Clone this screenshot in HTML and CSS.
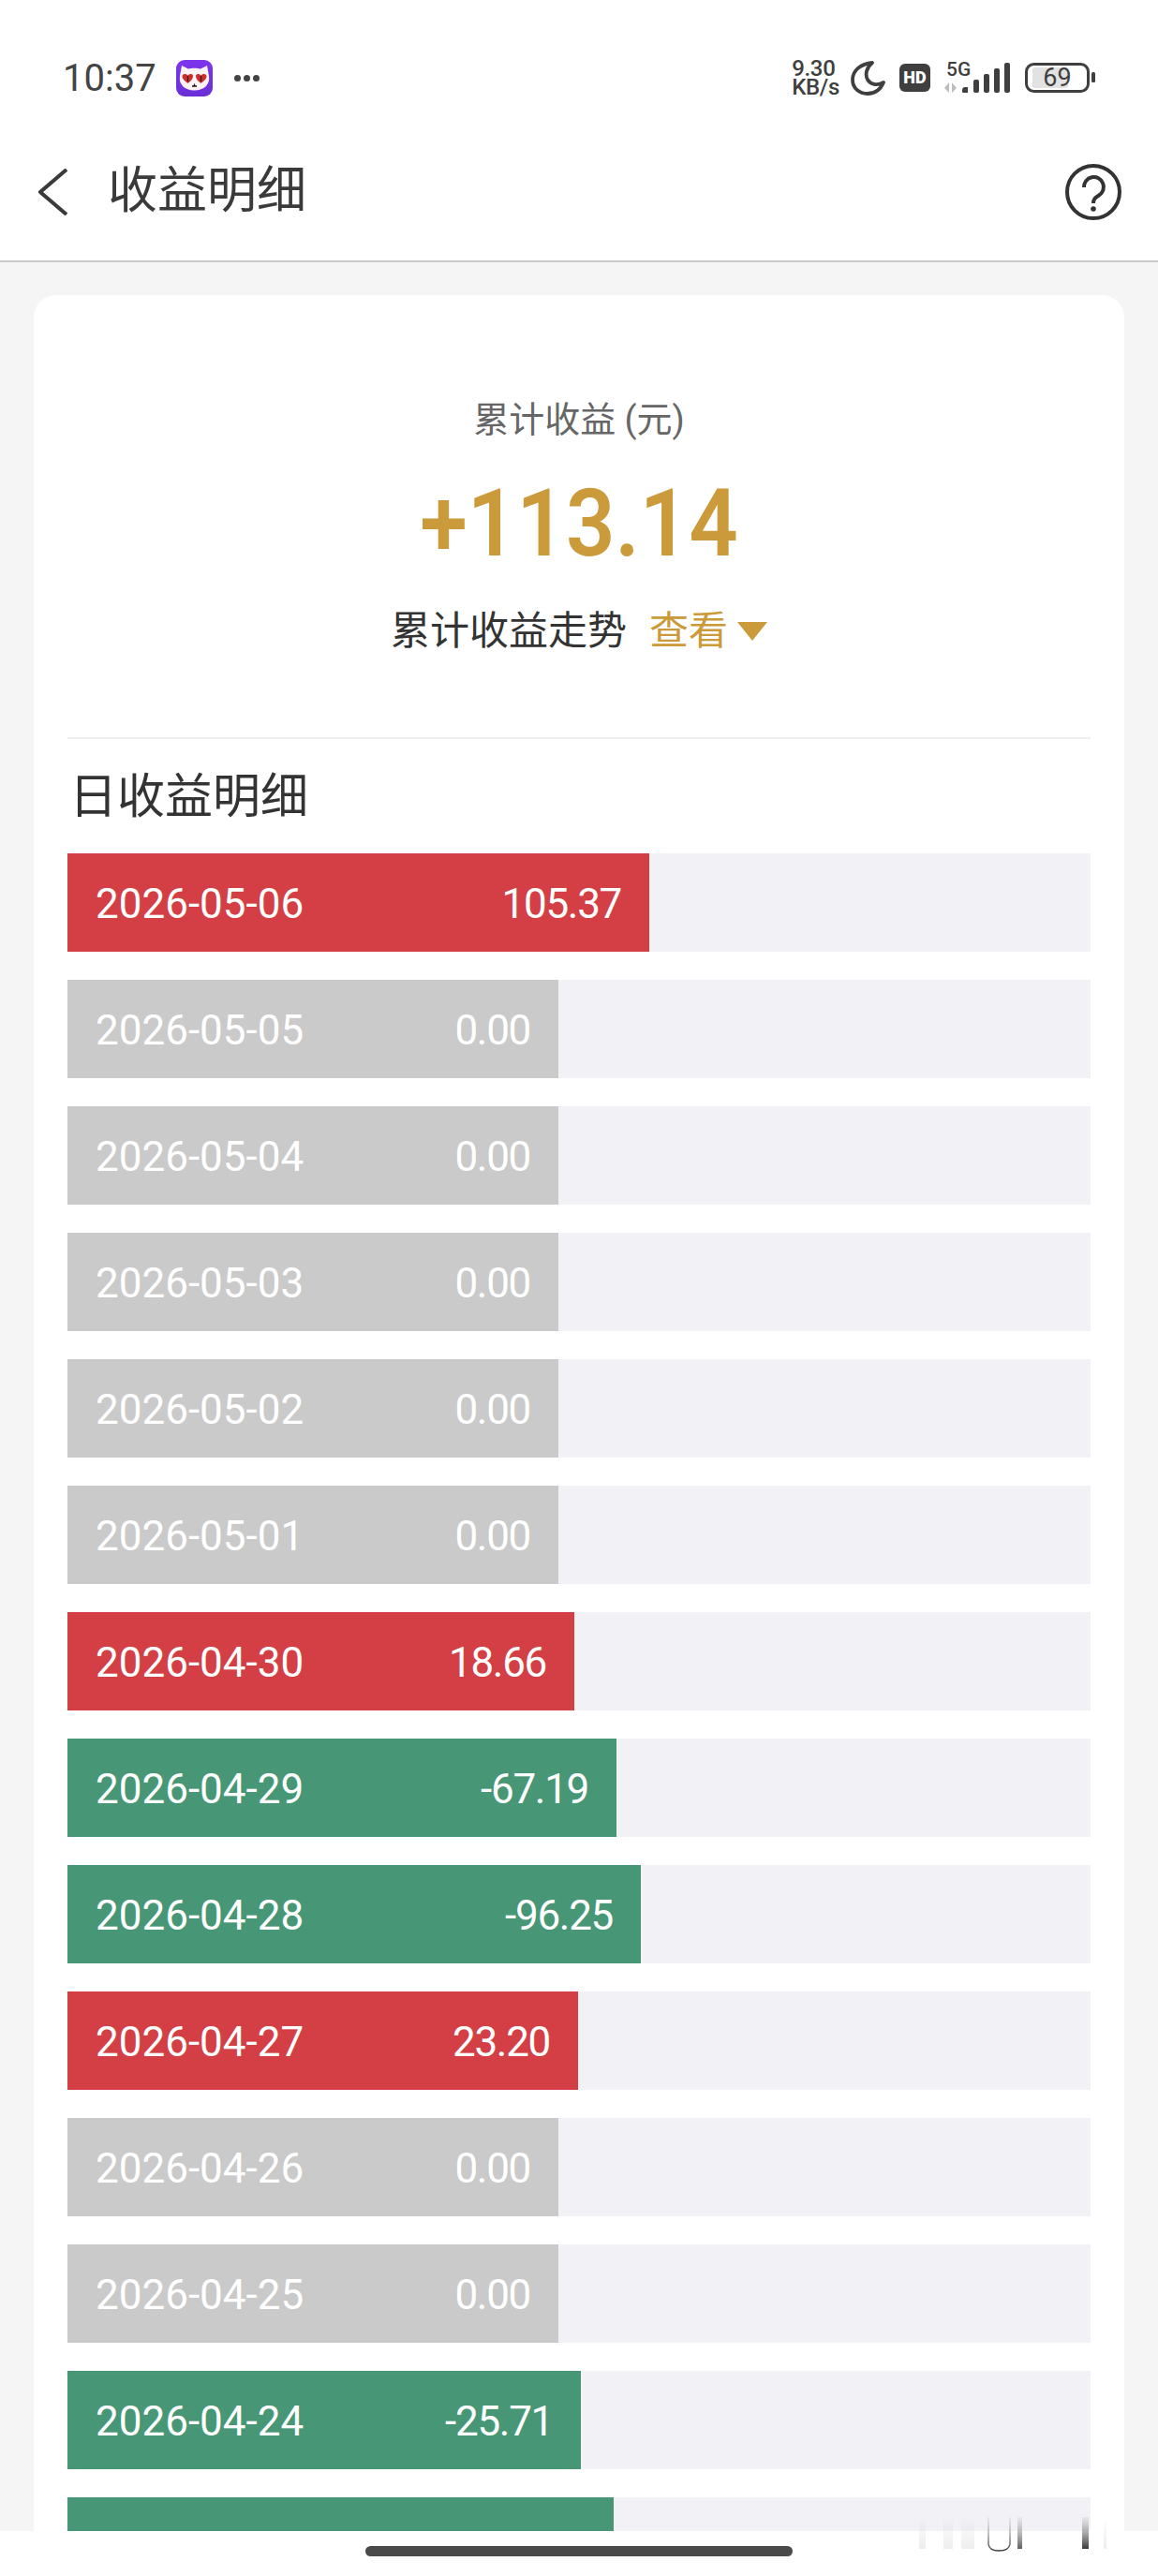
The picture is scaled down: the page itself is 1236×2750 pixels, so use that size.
FILE: index.html
```html
<!DOCTYPE html>
<html lang="zh-CN">
<head>
    <meta charset="UTF-8">
    <meta name="viewport" content="width=device-width, initial-scale=1.0">
    <title>收益明细</title>
    <link rel="stylesheet" href="styles.css">
</head>
<body>
    <div class="status-bar">
        <div class="status-left">
            <span class="time">10:37</span>
            <svg class="cat-icon" width="39" height="39" viewBox="0 0 39 39">
                <defs>
                    <linearGradient id="catBg" x1="0" y1="0" x2="0" y2="1">
                        <stop offset="0" stop-color="#7d35ee"/>
                        <stop offset="1" stop-color="#6a2fd6"/>
                    </linearGradient>
                </defs>
                <rect width="39" height="39" rx="9" fill="url(#catBg)"/>
                <path d="M4 17 L6 6 L13 9.500 C16.500 8.500 22.500 8.500 26 9.500 L33 6 L35 17 C36.500 26 30 32.500 19.500 32.500 C9 32.500 2.500 26 4 17 Z" fill="#fdf3f6"/>
                <path d="M12.500 25 C9.500 22.500 6.500 20.500 6.500 17.500 C6.500 15 9.500 14 12.500 16.500 C15.500 14 18.500 15 18 17.500 C18 20.500 15.500 22.500 12.500 25 Z" fill="#c9302f"/>
                <path d="M26.500 25 C23.500 22.500 21 20.500 21 17.500 C21 15 23.500 14 26.500 16.500 C29.500 14 32.500 15 32.500 17.500 C32.500 20.500 29.500 22.500 26.500 25 Z" fill="#c9302f"/>
                <rect x="11.800" y="17" width="1.400" height="6" fill="#3a1a1a"/>
                <rect x="25.800" y="17" width="1.400" height="6" fill="#3a1a1a"/>
                <path d="M17 28 H22 M19.500 25.500 V28" stroke="#111" stroke-width="1.300"/>
            </svg>
            <div class="more-dots"><i></i><i></i><i></i></div>
        </div>
        <div class="status-right">
            <div class="speed">
                <div>9.30</div>
                <div>KB/s</div>
            </div>
            <svg class="moon" width="37" height="37" viewBox="0 0 37 37">
                <path d="M23 2 C11 3 2 10 2 20 C2 29 9 35 18 35 C26 35 32 30 35 23 C28 27 21 25 18 20 C15 14 17 7 23 2 Z" fill="none" stroke="#3f3f3f" stroke-width="3.800" stroke-linejoin="round"/>
            </svg>
            <div class="hd">HD</div>
            <svg class="net" width="71" height="40" viewBox="0 -6 71 40">
                <text x="3" y="15" class="net-label">5G</text>
                <path d="M6 22 V33 L1 28 Z M9 22 V33 L14 28 Z" fill="#bdbdbd"/>
                <path d="M20 32 V30 Q20 28 22 27 L26 27 V33 H21 Q20 33 20 32 Z" fill="#3f3f3f"/>
                <rect x="32" y="19" width="6" height="14" rx="2" fill="#3f3f3f"/>
                <rect x="43" y="13" width="6" height="20" rx="2" fill="#3f3f3f"/>
                <rect x="54" y="7" width="6" height="26" rx="2" fill="#3f3f3f"/>
                <rect x="65" y="1" width="6" height="32" rx="2" fill="#3f3f3f"/>
            </svg>
            <svg class="battery" width="75" height="32" viewBox="0 0 75 32">
                <rect x="8" y="5" width="38" height="22" rx="3" fill="#e2e2e2"/>
                <rect x="1.500" y="1.500" width="66" height="29" rx="8" fill="none" stroke="#3f3f3f" stroke-width="3"/>
                <rect x="71" y="10" width="4" height="11" rx="1.500" fill="#3f3f3f"/>
                <text x="34.500" y="25" class="battery-label">69</text>
            </svg>
        </div>
    </div>

    <header class="top-bar">
        <svg class="back" width="32" height="50" viewBox="0 0 32 50">
            <path d="M30 1 L2 25 L30 49" fill="none" stroke="#3a3a3a" stroke-width="4"/>
        </svg>
        <h1>收益明细</h1>
        <svg class="help" width="60" height="60" viewBox="0 0 60 60">
            <circle cx="30" cy="30" r="28" fill="none" stroke="#333" stroke-width="4"/>
            <path d="M20 25 A10.500 10.500 0 1 1 36 33.500 C32 36 30 37.500 30 42" fill="none" stroke="#333" stroke-width="4"/>
            <circle cx="30" cy="48" r="2.800" fill="#333"/>
        </svg>
    </header>

    <main class="content">
        <section class="card">
            <div class="summary">
                <div class="summary-label">累计收益 (元)</div>
                <div class="summary-amount">+113.14</div>
                <div class="trend">
                    <span>累计收益走势</span>
                    <span class="trend-link">查看</span>
                    <span class="trend-arrow"></span>
                </div>
            </div>

            <h2>日收益明细</h2>

            <div class="day-list">
                <div class="day"><div class="day-bar up" style="width: 621px"><span>2026-05-06</span><span class="amount">105.37</span></div></div>
                <div class="day"><div class="day-bar flat" style="width: 524px"><span>2026-05-05</span><span class="amount">0.00</span></div></div>
                <div class="day"><div class="day-bar flat" style="width: 524px"><span>2026-05-04</span><span class="amount">0.00</span></div></div>
                <div class="day"><div class="day-bar flat" style="width: 524px"><span>2026-05-03</span><span class="amount">0.00</span></div></div>
                <div class="day"><div class="day-bar flat" style="width: 524px"><span>2026-05-02</span><span class="amount">0.00</span></div></div>
                <div class="day"><div class="day-bar flat" style="width: 524px"><span>2026-05-01</span><span class="amount">0.00</span></div></div>
                <div class="day"><div class="day-bar up" style="width: 541px"><span>2026-04-30</span><span class="amount">18.66</span></div></div>
                <div class="day"><div class="day-bar down" style="width: 586px"><span>2026-04-29</span><span class="amount">-67.19</span></div></div>
                <div class="day"><div class="day-bar down" style="width: 612px"><span>2026-04-28</span><span class="amount">-96.25</span></div></div>
                <div class="day"><div class="day-bar up" style="width: 545px"><span>2026-04-27</span><span class="amount">23.20</span></div></div>
                <div class="day"><div class="day-bar flat" style="width: 524px"><span>2026-04-26</span><span class="amount">0.00</span></div></div>
                <div class="day"><div class="day-bar flat" style="width: 524px"><span>2026-04-25</span><span class="amount">0.00</span></div></div>
                <div class="day"><div class="day-bar down" style="width: 548px"><span>2026-04-24</span><span class="amount">-25.71</span></div></div>
                <div class="day"><div class="day-bar down" style="width: 583px"></div></div>
            </div>
        </section>
    </main>

    <div class="nav-bar"><div class="home-indicator"></div></div>

    <svg class="nav-ghost" width="276" height="80" viewBox="0 0 276 80">
        <defs>
            <linearGradient id="ghostDark" x1="0" y1="0" x2="0" y2="1">
                <stop offset="0" stop-color="#888" stop-opacity="0.1"/>
                <stop offset="1" stop-color="#222" stop-opacity="0.9"/>
            </linearGradient>
            <linearGradient id="ghostFaint" x1="0" y1="0" x2="0" y2="1">
                <stop offset="0" stop-color="#ccc" stop-opacity="0"/>
                <stop offset="1" stop-color="#ccc" stop-opacity="0.35"/>
            </linearGradient>
        </defs>
        <rect x="21" y="17" width="7" height="34" fill="url(#ghostFaint)"/>
        <rect x="47" y="17" width="10" height="34" fill="url(#ghostFaint)"/>
        <rect x="66" y="17" width="14" height="34" fill="url(#ghostFaint)"/>
        <path d="M95 17 V46 Q96 53 106 53 Q117 53 118 46 V17" fill="none" stroke="url(#ghostDark)" stroke-width="1.500"/>
        <rect x="126" y="17" width="5" height="34" fill="url(#ghostDark)" opacity="0.8"/>
        <rect x="195" y="17" width="7" height="34" fill="url(#ghostDark)"/>
        <rect x="218" y="17" width="3" height="34" fill="url(#ghostFaint)"/>
    </svg>
</body>
</html>
```

FILE: styles.css
```css
* {
    box-sizing: border-box;
}
body {
    position: relative;
    height: 2750px;
    margin: 0;
    overflow: hidden;
    font-family: Roboto, "Noto Sans CJK SC", sans-serif;
    background-color: #f5f5f5;
    color: #333;
}

/* status bar */
.status-bar {
    display: flex;
    justify-content: space-between;
    align-items: center;
    height: 132px;
    padding: 34px 67px 0 67px;
    background-color: white;
}
.status-left,
.status-right {
    display: flex;
    align-items: center;
}
.time {
    font-size: 40px;
    color: #444;
}
.cat-icon {
    margin-left: 21px;
}
.more-dots {
    display: flex;
    gap: 3px;
    margin-left: 23px;
}
.more-dots i {
    width: 7px;
    height: 7px;
    border-radius: 50%;
    background-color: #444;
}
.speed {
    font-size: 24px;
    font-weight: 500;
    line-height: 20px;
    letter-spacing: -0.3px;
    color: #3f3f3f;
}
.moon {
    margin-left: 12px;
}
.hd {
    width: 33px;
    height: 30px;
    margin-left: 15px;
    border-radius: 6px;
    background-color: #3f3f3f;
    color: white;
    font-size: 18px;
    font-weight: 900;
    line-height: 30px;
    text-align: center;
}
.net {
    margin: -6px 0 0 14px;
}
.net-label {
    font-family: Roboto, sans-serif;
    font-size: 21px;
    font-weight: 500;
    fill: #3f3f3f;
}
.battery {
    margin-left: 16px;
}
.battery-label {
    font-family: Roboto, sans-serif;
    font-size: 27px;
    fill: #3f3f3f;
    text-anchor: middle;
}

/* title bar */
.top-bar {
    display: flex;
    align-items: center;
    height: 148px;
    padding: 0 39px 0 41px;
    border-bottom: 2px solid #c9c9c9;
    background-color: white;
}
.top-bar h1 {
    flex: 1;
    margin: -12px 0 0 42px;
    font-size: 53px;
    font-weight: 400;
    color: #3a3a3a;
}

/* card */
.content {
    padding: 35px 36px 0;
}
.card {
    padding: 0 36px;
    border-radius: 24px;
    background-color: white;
}
.summary {
    padding: 108px 0 89px;
    border-bottom: 2px solid #eeeeee;
    text-align: center;
}
.summary-label {
    font-size: 38px;
    line-height: 50px;
    color: #666;
}
.summary-amount {
    margin-top: 36px;
    font-size: 100px;
    font-weight: 600;
    line-height: 100px;
    color: #cb9a3a;
    transform: scaleX(0.92);
}
.trend {
    display: flex;
    justify-content: center;
    align-items: center;
    margin-top: 40px;
    margin-bottom: -1px;
    font-size: 42px;
    line-height: 50px;
}
.trend-link {
    margin-left: 24px;
    color: #cb9a3a;
}
.trend-arrow {
    width: 0;
    height: 0;
    margin-left: 10px;
    border-top: 20px solid #cb9a3a;
    border-left: 16px solid transparent;
    border-right: 16px solid transparent;
}
.card h2 {
    margin: 27px 0 25px 2px;
    font-size: 51px;
    font-weight: 400;
    line-height: 70px;
    color: #333;
}

/* daily rows */
.day-list {
    display: flex;
    flex-direction: column;
    gap: 30px;
}
.day {
    height: 105px;
    background-color: #f1f1f6;
}
.day-bar {
    display: flex;
    justify-content: space-between;
    align-items: center;
    height: 100%;
    padding: 2px 30px 0;
    color: white;
    font-size: 44px;
}
.amount {
    letter-spacing: -1.3px;
}
.up {
    background-color: #d33f44;
}
.down {
    background-color: #479776;
}
.flat {
    background-color: #cacaca;
}

/* gesture bar */
.nav-bar {
    position: absolute;
    left: 0;
    right: 0;
    bottom: 0;
    height: 48px;
    background-color: white;
}
.home-indicator {
    position: absolute;
    left: 390px;
    top: 16px;
    width: 456px;
    height: 11px;
    border-radius: 6px;
    background-color: #4a4a4a;
}
.nav-ghost {
    position: absolute;
    left: 960px;
    top: 2670px;
}
```
